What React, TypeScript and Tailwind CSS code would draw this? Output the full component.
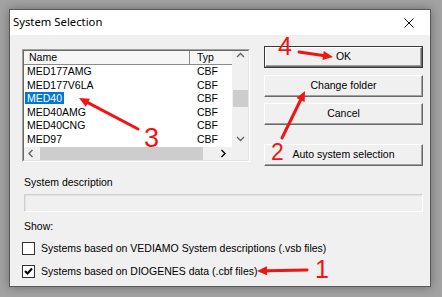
import React from 'react';

const ROWS = ['MED177AMG', 'MED177V6LA', 'MED40', 'MED40AMG', 'MED40CNG', 'MED97'];
const UI_FONT = { fontFamily: '"Liberation Sans", Arial, sans-serif' };
const RED = '#f01414';

function Chevron({ dir, className }: { dir: 'up' | 'down' | 'left' | 'right'; className?: string }) {
  const pts = {
    up: '1,5 4.5,1.5 8,5',
    down: '1,2 4.5,5.5 8,2',
    left: '5.5,1 2,4.5 5.5,8',
    right: '2.5,1 6,4.5 2.5,8',
  }[dir];
  return (
    <svg width="9" height="9" viewBox="0 0 9 9" className={className} aria-hidden>
      <polyline points={pts} fill="none" stroke="currentColor" strokeWidth="1.3" />
    </svg>
  );
}

function Button({ label, isDefault }: { label: string; isDefault?: boolean }) {
  const face = (
    <div className="flex h-full w-full items-center justify-center border border-t-white border-l-white border-r-[#696969] border-b-[#696969] bg-[#f0f0f0] text-[10.5px] text-black shadow-[inset_-1px_-1px_0_#a0a0a0]">
      {label}
    </div>
  );
  return (
    <div className={isDefault ? 'h-[22px] w-full border border-[#3a3a3a]' : 'h-[22px] w-full'}>{face}</div>
  );
}

function Checkbox({ checked, label }: { checked?: boolean; label: string }) {
  return (
    <div className="flex h-[13px] items-center gap-[6px]">
      <div className="flex h-[13px] w-[13px] items-center justify-center border border-[#333] bg-white">
        {checked && (
          <svg width="9" height="9" viewBox="0 0 9 9" aria-hidden>
            <polyline points="1,4 3.5,6.5 8,1.5" fill="none" stroke="#000" strokeWidth="2" />
          </svg>
        )}
      </div>
      <span className="text-[10.5px] leading-[13px] text-black">{label}</span>
    </div>
  );
}

function Arrow({ x1, y1, x2, y2 }: { x1: number; y1: number; x2: number; y2: number }) {
  const a = Math.atan2(y2 - y1, x2 - x1);
  const len = 10;
  const half = 4.5;
  const bx = x2 - Math.cos(a) * len;
  const by = y2 - Math.sin(a) * len;
  const px = -Math.sin(a) * half;
  const py = Math.cos(a) * half;
  return (
    <g>
      <line x1={x1} y1={y1} x2={bx} y2={by} stroke={RED} strokeWidth="3" strokeLinecap="round" />
      <polygon points={`${x2},${y2} ${bx + px},${by + py} ${bx - px},${by - py}`} fill={RED} />
    </g>
  );
}

function SystemList() {
  return (
    <div className="mt-[3px] h-[113px] w-[228px] border border-t-[#a0a0a0] border-l-[#a0a0a0] border-r-white border-b-white">
      <div className="flex h-full w-full flex-col border border-t-[#696969] border-l-[#696969] border-r-[#e3e3e3] border-b-[#e3e3e3] bg-white">
        <div className="flex">
          <div className="w-[208px]">
            <div className="flex h-[14px] bg-[#f6f6f6] text-[10.5px] leading-[12px] text-black">
              <div className="w-[166px] border-r border-b border-r-[#8a8a8a] border-b-[#8a8a8a] pl-[5px]">Name</div>
              <div className="flex-1 border-b border-b-[#8a8a8a] pl-[7px]">Typ</div>
            </div>
            {ROWS.map((name) => (
              <div key={name} className="flex h-[13.6px] items-center text-[10.5px] text-black">
                <div className="w-[166px] pl-[1px]">
                  <span className={name === 'MED40' ? 'bg-[#0078d7] px-[2px] text-white' : 'px-[2px]'}>{name}</span>
                </div>
                <div className="pl-[7px]">CBF</div>
              </div>
            ))}
          </div>
          <div className="flex w-[16px] flex-col items-center bg-[#f0f0f0] text-[#606060]">
            <Chevron dir="up" className="mt-[1px]" />
            <div className="mt-[29px] h-[17px] w-[15px] bg-[#cdcdcd]" />
            <Chevron dir="down" className="mt-[28px]" />
          </div>
        </div>
        <div className="flex flex-1 items-center bg-[#f0f0f0]">
          <Chevron dir="left" className="ml-[3px] text-[#606060]" />
          <div className="ml-[4px] h-full w-[163px] bg-[#cdcdcd]" />
          <Chevron dir="right" className="ml-[16px] text-black" />
        </div>
      </div>
    </div>
  );
}

export default function App() {
  return (
    <div className="relative h-[297px] w-[442px] overflow-hidden bg-[#a3a3a3] pl-[9px] pt-[9px]" style={UI_FONT}>
      <div className="flex h-[278px] w-[422px] flex-col border border-[#595959] bg-[#f0f0f0] shadow-[0_0_10px_rgba(0,0,0,0.35)]">
        <div className="flex h-[25px] shrink-0 items-center justify-between bg-white pl-[3px] pr-[16px]">
          <span className="text-[11.3px] text-black" style={{ fontFamily: '"Noto Sans", "Open Sans", sans-serif' }}>
            System Selection
          </span>
          <svg width="10" height="10" viewBox="0 0 10 10" aria-hidden>
            <path d="M0.5 0.5 L9.5 9.5 M9.5 0.5 L0.5 9.5" stroke="#111" strokeWidth="1" />
          </svg>
        </div>

        <div className="flex flex-col pl-[12px] pr-[7px]">
          <div className="mt-[11px] flex gap-[14px]">
            <SystemList />
            <div className="flex w-[159px] flex-col">
              <Button label="OK" isDefault />
              <div className="mt-[7px]">
                <Button label="Change folder" />
              </div>
              <div className="mt-[6px]">
                <Button label="Cancel" />
              </div>
              <div className="mt-[19px]">
                <Button label="Auto system selection" />
              </div>
            </div>
          </div>

          <div className="mt-[10px] pl-[2px] text-[10.5px] leading-[13px] text-black">System description</div>
          <div className="ml-[2px] mt-[5px] h-[18px] border border-t-[#cfcfcf] border-l-[#cfcfcf] border-r-white border-b-white bg-[#f0f0f0] shadow-[inset_1px_1px_0_#e3e3e3]" />
          <div className="mt-[8px] pl-[2px] text-[10.5px] leading-[13px] text-black">Show:</div>
          <div className="mt-[9px]">
            <Checkbox label="Systems based on VEDIAMO System descriptions (.vsb files)" />
          </div>
          <div className="mt-[10px]">
            <Checkbox checked label="Systems based on DIOGENES data (.cbf files)" />
          </div>
        </div>
      </div>

      <svg className="pointer-events-none absolute left-0 top-0" width="442" height="297" viewBox="0 0 442 297">
        <Arrow x1={307} y1={270} x2={257} y2={271} />
        <Arrow x1={282} y1={138} x2={305} y2={91} />
        <Arrow x1={138} y1={129} x2={79} y2={98} />
        <Arrow x1={299} y1={52} x2={333} y2={57} />
        <g fill={RED} style={{ fontFamily: '"Liberation Sans", Arial, sans-serif' }}>
          <text x={315} y={278} fontSize="25">1</text>
          <text x={271} y={160} fontSize="23">2</text>
          <text x={144} y={147} fontSize="27">3</text>
          <text x={278} y={55} fontSize="25">4</text>
        </g>
      </svg>
    </div>
  );
}
